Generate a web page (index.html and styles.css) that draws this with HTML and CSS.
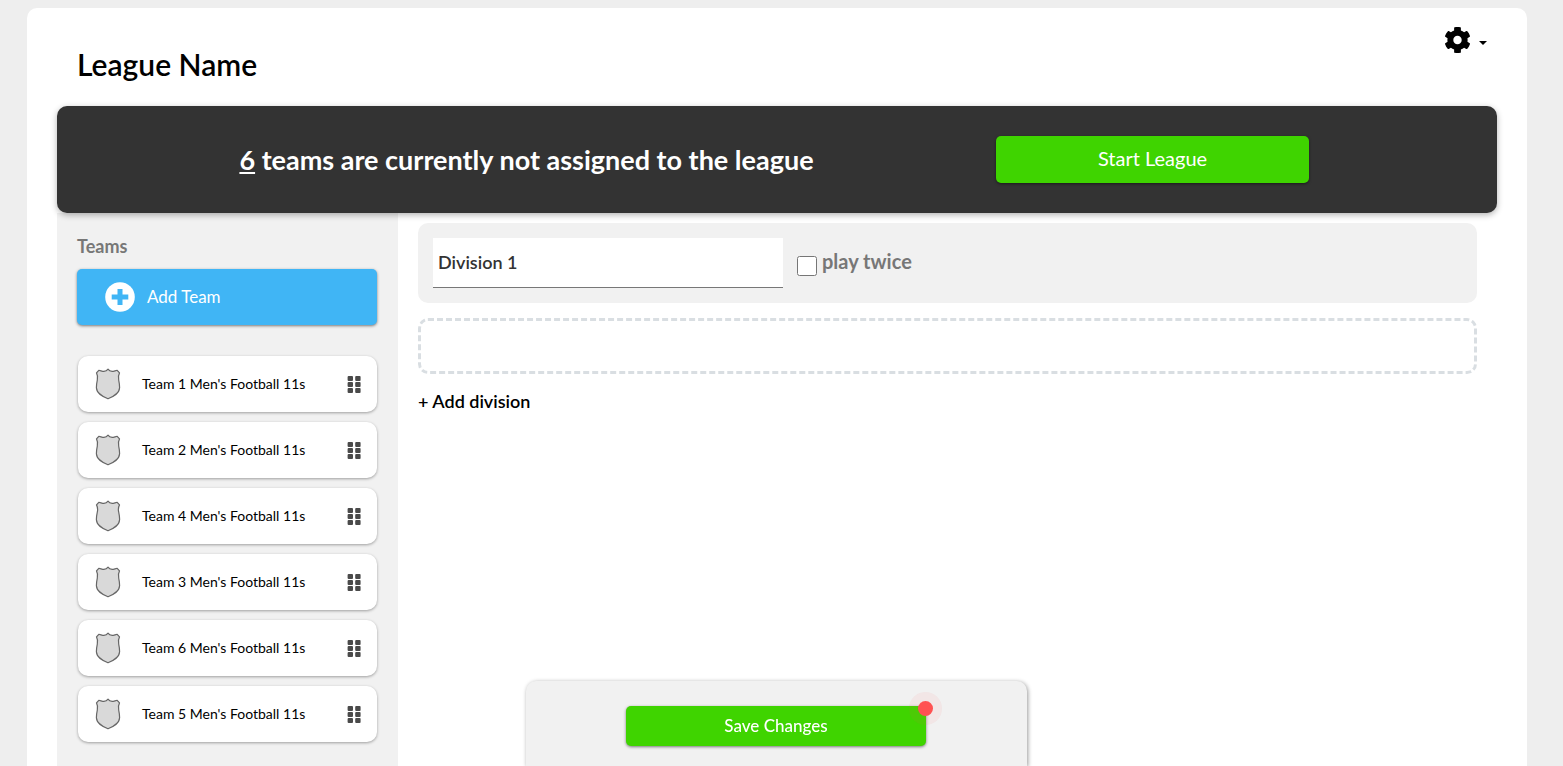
FILE: index.html
```html
<!DOCTYPE html>
<html lang="en">
<head>
<meta charset="utf-8">
<meta name="viewport" content="width=device-width, initial-scale=1">
<title>League Name</title>
<link rel="stylesheet" href="styles.css">
</head>
<body>
<svg class="sprite" aria-hidden="true">
  <symbol id="shield" viewBox="0 0 26 32">
    <path d="M13 1.200C11.800 3 10 3.600 7.800 3.300C6.400 3.100 5 2.700 3.800 2.300L1.500 4.900C2.800 7.300 2.900 9.600 2.300 12.200C1.700 15 1.300 17.200 1.400 19.800C1.800 25.600 7 28.300 13 30.800C19 28.300 24.200 25.600 24.600 19.800C24.700 17.200 24.300 15 23.700 12.200C23.100 9.600 23.200 7.300 24.500 4.900L22.200 2.300C21 2.700 19.600 3.100 18.200 3.300C16 3.600 14.200 3 13 1.200Z" fill="#d9d9d9" stroke="#666" stroke-width="1.200" stroke-linejoin="round"/>
  </symbol>
  <symbol id="grip" viewBox="0 0 14 18">
    <g fill="#4a4a4a">
      <rect x=".6" y="1" width="5.400" height="5" rx="1"/><rect x="8.200" y="1" width="5.400" height="5" rx="1"/>
      <rect x=".6" y="7" width="5.400" height="5" rx="1"/><rect x="8.200" y="7" width="5.400" height="5" rx="1"/>
      <rect x=".6" y="13" width="5.400" height="5" rx="1"/><rect x="8.200" y="13" width="5.400" height="5" rx="1"/>
    </g>
  </symbol>
</svg>
<main class="card">
  <header class="header">
    <h1 class="title">League Name</h1>
    <button class="settings" type="button" aria-label="League settings">
      <svg class="gear" viewBox="0 0 512 512" aria-hidden="true"><path d="M487.400 315.700l-42.600-24.600c4.300-23.200 4.300-47 0-70.200l42.600-24.600c4.900-2.800 7.100-8.600 5.500-14-11.100-35.600-30-67.800-54.700-94.600-3.800-4.100-10-5.100-14.800-2.300L380.800 110c-17.900-15.400-38.500-27.300-60.800-35.100V25.800c0-5.600-3.900-10.500-9.400-11.700-36.700-8.200-74.300-7.800-109.200 0-5.500 1.200-9.400 6.100-9.400 11.700V75c-22.200 7.900-42.800 19.800-60.800 35.100L88.700 85.500c-4.900-2.800-11-1.900-14.800 2.300-24.700 26.700-43.600 58.900-54.700 94.600-1.700 5.400.6 11.200 5.500 14L67.300 221c-4.300 23.200-4.300 47 0 70.200l-42.600 24.600c-4.900 2.800-7.100 8.600-5.500 14 11.100 35.600 30 67.800 54.700 94.600 3.800 4.100 10 5.100 14.800 2.300l42.600-24.600c17.900 15.400 38.500 27.300 60.800 35.100v49.200c0 5.600 3.900 10.500 9.400 11.700 36.700 8.200 74.300 7.800 109.200 0 5.500-1.200 9.400-6.100 9.400-11.700v-49.200c22.200-7.900 42.800-19.800 60.800-35.100l42.600 24.600c4.900 2.800 11 1.900 14.800-2.300 24.700-26.700 43.600-58.900 54.700-94.600 1.500-5.500-.7-11.300-5.600-14.100zM256 336c-44.100 0-80-35.900-80-80s35.900-80 80-80 80 35.900 80 80-35.900 80-80 80z"/></svg>
      <span class="caret"></span>
    </button>
  </header>

  <section class="banner">
    <p class="banner-text"><span class="count">6</span> teams are currently not assigned to the league</p>
    <button class="btn start" type="button">Start League</button>
  </section>

  <div class="columns">
    <aside class="sidebar">
      <h2 class="sidebar-title">Teams</h2>
      <button class="btn add-team" type="button">
        <svg class="plus" viewBox="0 0 30 30" aria-hidden="true"><circle cx="15" cy="15" r="14.800" fill="#fff"/><path d="M12.500 7h5v5.500h5.800v5h-5.800V23h-5v-5.500H6.700v-5h5.800z" fill="#40b5f5"/></svg>
        <span class="add-label">Add Team</span>
      </button>
      <ul class="teams">
        <li class="team"><svg class="shield"><use href="#shield"/></svg><span class="team-name">Team 1 Men's Football 11s</span><svg class="grip"><use href="#grip"/></svg></li>
        <li class="team"><svg class="shield"><use href="#shield"/></svg><span class="team-name">Team 2 Men's Football 11s</span><svg class="grip"><use href="#grip"/></svg></li>
        <li class="team"><svg class="shield"><use href="#shield"/></svg><span class="team-name">Team 4 Men's Football 11s</span><svg class="grip"><use href="#grip"/></svg></li>
        <li class="team"><svg class="shield"><use href="#shield"/></svg><span class="team-name">Team 3 Men's Football 11s</span><svg class="grip"><use href="#grip"/></svg></li>
        <li class="team"><svg class="shield"><use href="#shield"/></svg><span class="team-name">Team 6 Men's Football 11s</span><svg class="grip"><use href="#grip"/></svg></li>
        <li class="team"><svg class="shield"><use href="#shield"/></svg><span class="team-name">Team 5 Men's Football 11s</span><svg class="grip"><use href="#grip"/></svg></li>
      </ul>
    </aside>

    <section class="divisions">
      <div class="division">
        <input class="division-name" type="text" value="Division 1" aria-label="Division name">
        <div class="twice">
          <input class="twice-box" type="checkbox" id="play-twice">
          <label class="twice-label" for="play-twice">play twice</label>
        </div>
      </div>
      <div class="dropzone"></div>
      <button class="add-division" type="button">+ Add division</button>
    </section>
  </div>
</main>

<div class="save-bar">
  <div class="save-panel">
    <button class="btn save" type="button">Save Changes<span class="dot"></span></button>
  </div>
</div>
</body>
</html>
```
FILE: styles.css
```css
* {
  box-sizing: border-box;
}

body {
  margin: 0;
  padding: 8px 36px 0 27px;
  background: #eee;
  color: #000;
  font-family: Lato, "Liberation Sans", sans-serif;
}

button,
input {
  font-family: inherit;
}

.sprite {
  display: none;
}

.card {
  display: flex;
  flex-direction: column;
  min-height: calc(100vh - 8px);
  padding: 0 30px;
  background: #fff;
  border-radius: 10px 10px 0 0;
}

.header {
  display: flex;
  justify-content: space-between;
  align-items: flex-start;
  height: 98px;
  padding: 18px 10px 0 20px;
}

.title {
  margin: 20px 0 0;
  font-size: 30px;
  line-height: 36px;
  font-weight: 600;
}

.settings {
  display: flex;
  align-items: center;
  gap: 8px;
  padding: 0;
  border: 0;
  background: none;
}

.gear {
  width: 27px;
  height: 28px;
}

.caret {
  margin-top: 6px;
  border: 4px solid transparent;
  border-top-color: #000;
  border-bottom: 0;
}

.banner {
  position: relative;
  display: flex;
  justify-content: space-evenly;
  align-items: center;
  padding: 30px 10px 30px 0;
  background: #333;
  border-radius: 10px;
  box-shadow: 0 2px 6px rgba(0, 0, 0, 0.3);
}

.banner-text {
  min-width: 583px;
  margin: 0;
  color: #fff;
  font-size: 27px;
  line-height: 36px;
  font-weight: 700;
  text-align: center;
}

.count {
  text-decoration: underline;
}

.btn {
  border: 0;
  border-radius: 5px;
  background: #3fd400;
  color: #fff;
  box-shadow: 0 1px 3px rgba(0, 0, 0, 0.5);
}

.start {
  width: 313px;
  height: 47px;
  padding: 0 0 3px;
  font-size: 20px;
}

.columns {
  flex: 1;
  display: flex;
}

.sidebar {
  flex: none;
  width: 341px;
  padding: 21px 20px 24px;
  background: #f1f1f1;
}

.sidebar-title {
  margin: 0 0 11px;
  color: #777;
  font-size: 18px;
  line-height: 24px;
  font-weight: 700;
}

.add-team {
  display: flex;
  align-items: center;
  gap: 12px;
  width: 300px;
  height: 56px;
  padding: 0 28px;
  background: #40b5f5;
  font-size: 17px;
}

.add-label {
  padding-bottom: 2px;
}

.plus {
  width: 30px;
  height: 30px;
}

.teams {
  display: flex;
  flex-direction: column;
  gap: 10px;
  margin: 31px 0 0;
  padding: 0 1px;
  list-style: none;
}

.team {
  display: flex;
  align-items: center;
  height: 56px;
  padding: 0 16px 0 17px;
  background: #fff;
  border-radius: 10px;
  box-shadow: 0 1px 3px rgba(0, 0, 0, 0.35);
}

.shield {
  width: 26px;
  height: 32px;
}

.team-name {
  flex: 1;
  margin-left: 21px;
  font-size: 14px;
  line-height: 20px;
}

.grip {
  width: 14px;
  height: 18px;
}

.divisions {
  flex: 1;
  padding: 10px 20px;
}

.division {
  display: flex;
  align-items: center;
  gap: 14px;
  padding: 15px;
  background: #f1f1f1;
  border-radius: 10px;
}

.division-name {
  width: 350px;
  height: 50px;
  padding: 0 5px 2px;
  border: 0;
  border-bottom: 1px solid #777;
  background: #fff;
  color: #333;
  font-size: 18px;
  font-weight: 600;
}

.twice {
  display: flex;
  align-items: flex-end;
  gap: 5px;
  padding-bottom: 2px;
}

.twice-box {
  width: 20px;
  height: 20px;
  margin: 0;
}

.twice-label {
  padding-bottom: 3px;
  color: #777;
  font-size: 20px;
  line-height: 24px;
  font-weight: 700;
}

.dropzone {
  height: 56px;
  margin-top: 15px;
  border: 3px dashed #d9dee2;
  border-radius: 10px;
}

.add-division {
  display: block;
  margin-top: 15px;
  padding: 0;
  border: 0;
  background: none;
  color: #000;
  font-size: 18px;
  line-height: 24px;
  font-weight: 600;
}

.save-bar {
  position: fixed;
  right: 36px;
  bottom: 0;
  left: 26px;
  display: flex;
  justify-content: center;
  pointer-events: none;
}

.save-panel {
  width: 501px;
  padding: 25px 101px 20px 100px;
  background: #f1f1f1;
  border-radius: 10px 10px 0 0;
  box-shadow: 1px 1px 4px rgba(0, 0, 0, 0.4);
  pointer-events: auto;
}

.save {
  position: relative;
  width: 100%;
  height: 40px;
  padding: 0 0 2px;
  font-size: 17px;
  font-weight: 500;
}

.dot {
  position: absolute;
  top: -5px;
  right: -7px;
  width: 15px;
  height: 15px;
  border-radius: 50%;
  background: #ff5252;
  box-shadow: 0 0 0 9px rgba(255, 82, 82, 0.07);
}
```
